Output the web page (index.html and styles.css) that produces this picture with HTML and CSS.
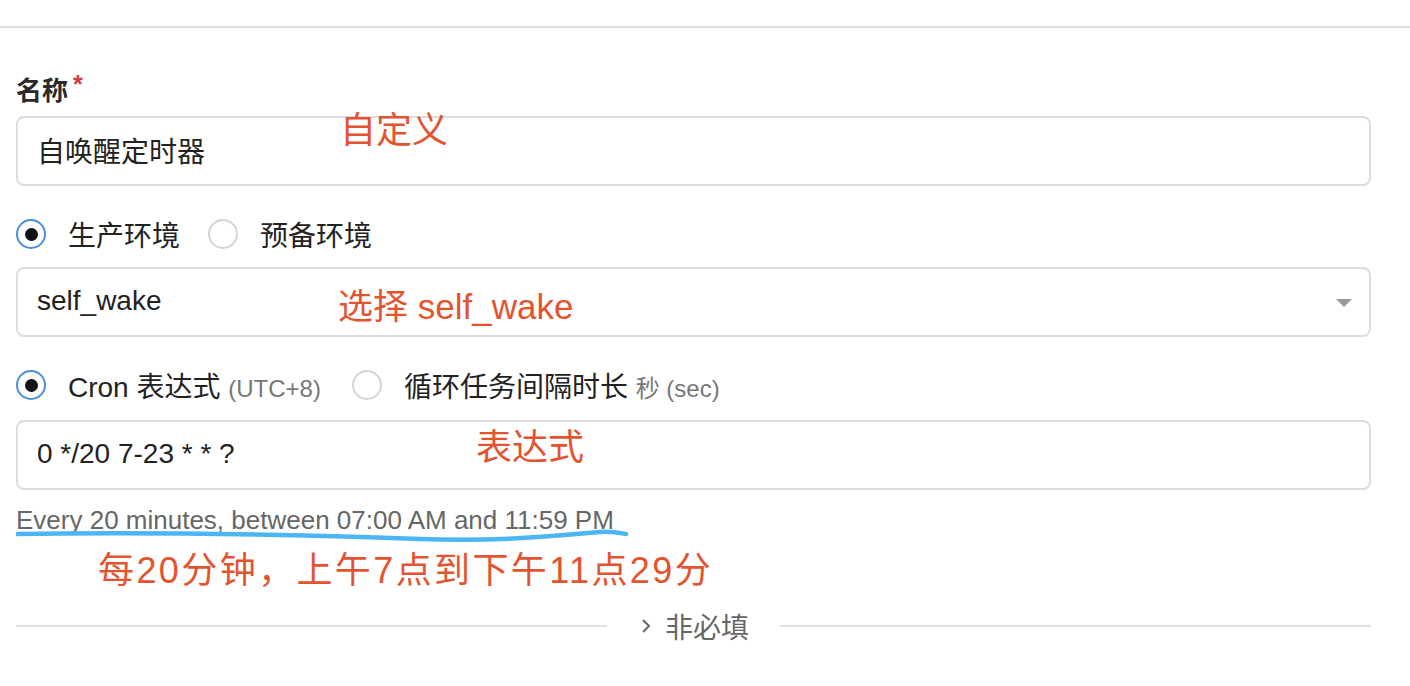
FILE: index.html
```html
<!DOCTYPE html>
<html lang="zh-CN">
<head>
<meta charset="utf-8">
<title>自唤醒定时器</title>
<link rel="stylesheet" href="styles.css">
</head>
<body>
<div class="topbar"></div>
<form class="form">
  <div class="field-label">名称<span class="req">*</span></div>

  <div class="control-wrap first">
    <div class="input"><span class="value">自唤醒定时器</span></div>
    <span class="annot annot-name">自定义</span>
  </div>

  <div class="radio-row">
    <label class="option"><span class="radio checked"></span><span class="opt-text">生产环境</span></label>
    <label class="option"><span class="radio"></span><span class="opt-text">预备环境</span></label>
  </div>

  <div class="control-wrap">
    <div class="input select">
      <span class="value">self_wake</span>
      <span class="caret"></span>
    </div>
    <span class="annot annot-select">选择 self_wake</span>
  </div>

  <div class="radio-row wide">
    <label class="option"><span class="radio checked"></span><span class="opt-text">Cron 表达式 <span class="muted">(UTC+8)</span></span></label>
    <label class="option"><span class="radio"></span><span class="opt-text">循环任务间隔时长 <span class="muted">秒 (sec)</span></span></label>
  </div>

  <div class="control-wrap">
    <div class="input"><span class="value">0 */20 7-23 * * ?</span></div>
    <span class="annot annot-expr">表达式</span>
  </div>

  <div class="hint">
    <span class="hint-text">Every 20 minutes, between 07:00 AM and 11:59 PM</span>
    <svg class="scribble" width="620" height="40" viewBox="0 0 620 40">
      <path d="M1 29 C 120 27, 260 29, 404 34 C 480 37, 540 31, 584 27 C 596 26, 605 28, 610 29" fill="none" stroke="#4cb6f4" stroke-width="4.5" stroke-linecap="round"/>
    </svg>
  </div>

  <div class="note">每20分钟，上午7点到下午11点29分</div>

  <div class="divider">
    <span class="line"></span>
    <span class="divider-content">
      <svg class="chevron" width="10" height="16" viewBox="0 0 10 16"><path d="M2 2 L8 8 L2 14" fill="none" stroke="#666" stroke-width="2"/></svg>
      <span>非必填</span>
    </span>
    <span class="line"></span>
  </div>
</form>
</body>
</html>
```

FILE: styles.css
```css
* { box-sizing: border-box; }

html, body {
  margin: 0;
  padding: 0;
  background: #ffffff;
}

body {
  font-family: "Liberation Sans", "Noto Sans CJK SC", sans-serif;
  color: #222222;
}

.topbar {
  height: 28px;
  border-bottom: 2px solid #dfdfdf;
}

.form {
  width: 1371px;
  padding-left: 16px;
}

.field-label {
  margin-top: 41px;
  font-size: 26px;
  line-height: 30px;
  font-weight: bold;
  color: #2a2a2a;
}

.req {
  color: #d33a3a;
  font-size: 25px;
  font-weight: bold;
  margin-left: 5px;
  vertical-align: 7px;
}

.control-wrap {
  position: relative;
  margin-top: 13px;
}

.control-wrap.first { margin-top: 10px; }

.input {
  height: 70px;
  border: 2px solid #dddddd;
  border-radius: 8px;
  display: flex;
  align-items: center;
  padding: 0 17px 2px 19px;
  font-size: 28px;
  color: #222222;
}

.input .value { flex: 1; }

.caret {
  width: 0;
  height: 0;
  border-left: 8px solid transparent;
  border-right: 8px solid transparent;
  border-top: 8px solid #9a9a9a;
  margin-top: 4px;
}

.annot {
  position: absolute;
  font-size: 36px;
  line-height: 36px;
  color: #e4532f;
  white-space: nowrap;
}

.annot-name { left: 324px; top: -3px; }
.annot-select { left: 322px; top: 22px; font-size: 35px; }
.annot-expr { left: 460px; top: 10px; }

.radio-row {
  margin-top: 28px;
  height: 40px;
  display: flex;
  align-items: center;
  gap: 28px;
}

.radio-row.wide { gap: 31px; }

.control-wrap + .radio-row { margin-top: 28px; }
.radio-row + .control-wrap { margin-top: 13px; }
.radio-row.wide + .control-wrap { margin-top: 15px; }

.option {
  display: flex;
  align-items: center;
  font-size: 28px;
  color: #222222;
}

.radio {
  width: 30px;
  height: 30px;
  border: 2px solid #d4d4d4;
  border-radius: 50%;
  margin-right: 22px;
  display: flex;
  align-items: center;
  justify-content: center;
}

.radio.checked { border-color: #4a8fdb; }

.radio.checked::after {
  content: "";
  width: 13px;
  height: 13px;
  border-radius: 50%;
  background: #111111;
}

.muted {
  font-size: 24px;
  color: #777777;
}

.hint {
  position: relative;
  margin-top: 15px;
  font-size: 26px;
  line-height: 30px;
  color: #666666;
}

.scribble {
  position: absolute;
  left: 0;
  top: 0;
}

.note {
  margin-top: 14px;
  padding-left: 82px;
  font-size: 36px;
  line-height: 44px;
  letter-spacing: 2.4px;
  color: #e4532f;
}

.divider {
  margin-top: 18px;
  height: 30px;
  display: flex;
  align-items: center;
}

.divider .line {
  flex: 1;
  height: 2px;
  background: #e0e0e0;
}

.divider-content {
  display: flex;
  align-items: center;
  gap: 14px;
  margin: 0 31px 0 34px;
  font-size: 28px;
  color: #666666;
}
```
